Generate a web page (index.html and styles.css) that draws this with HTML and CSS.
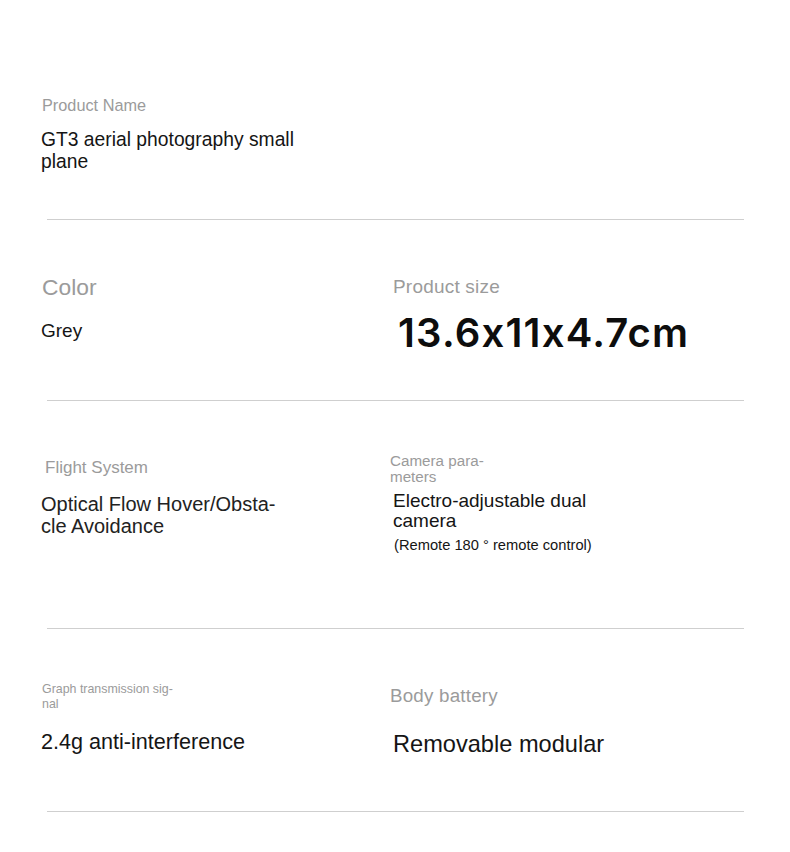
FILE: index.html
```html
<!DOCTYPE html>
<html lang="en">
<head>
<meta charset="utf-8">
<title>GT3 specs</title>
<link rel="stylesheet" href="styles.css">
</head>
<body>
<main class="sheet">
  <section class="spec s1">
    <div class="cell">
      <div class="label l-name">Product Name</div>
      <div class="value v-name">GT3 aerial photography small<br>plane</div>
    </div>
    <div class="cell"></div>
  </section>
  <div class="rule"></div>

  <section class="spec s2">
    <div class="cell">
      <div class="label l-color">Color</div>
      <div class="value v-color">Grey</div>
    </div>
    <div class="cell">
      <div class="label l-size">Product size</div>
      <div class="value v-size">13.6x11x4.7cm</div>
    </div>
  </section>
  <div class="rule"></div>

  <section class="spec s3">
    <div class="cell">
      <div class="label l-flight">Flight System</div>
      <div class="value v-flight">Optical Flow Hover/Obsta-<br>cle Avoidance</div>
    </div>
    <div class="cell">
      <div class="label l-camera">Camera para-<br>meters</div>
      <div class="value v-camera">Electro-adjustable dual<br>camera</div>
      <div class="value v-remote">(Remote 180 ° remote control)</div>
    </div>
  </section>
  <div class="rule"></div>

  <section class="spec s4">
    <div class="cell">
      <div class="label l-graph">Graph transmission sig-<br>nal</div>
      <div class="value v-graph">2.4g anti-interference</div>
    </div>
    <div class="cell">
      <div class="label l-battery">Body battery</div>
      <div class="value v-battery">Removable modular</div>
    </div>
  </section>
  <div class="rule"></div>
</main>
</body>
</html>
```

FILE: styles.css
```css
html, body {
  margin: 0;
  padding: 0;
  background: #ffffff;
}

body {
  font-family: "Liberation Sans", Arial, sans-serif;
  width: 790px;
  height: 852px;
  overflow: hidden;
}

.sheet {
  display: flex;
  flex-direction: column;
}

.spec {
  display: grid;
  grid-template-columns: 349px 1fr;
  padding-left: 41px;
  box-sizing: border-box;
}

.s1 { height: 219px; }
.s2 { height: 180px; }
.s3 { height: 227px; }
.s4 { height: 182px; }

.rule {
  height: 1px;
  margin: 0 46px 0 47px;
  background: #cfcfcf;
}

.cell {
  display: flex;
  flex-direction: column;
  align-items: flex-start;
}

.label {
  color: #9b9b9b;
  white-space: nowrap;
}

.value {
  color: #151515;
  white-space: nowrap;
}

/* section 1 */
.l-name {
  font-size: 16.3px;
  line-height: 20px;
  margin: 95px 0 0 1px;
}
.v-name {
  font-size: 19.3px;
  line-height: 22px;
  margin-top: 14px;
}

/* section 2 */
.l-color {
  font-size: 22.8px;
  line-height: 26px;
  margin: 54px 0 0 1px;
}
.v-color {
  font-size: 19px;
  line-height: 22px;
  margin-top: 20px;
}
.l-size {
  font-size: 19px;
  line-height: 22px;
  letter-spacing: 0.2px;
  margin: 56px 0 0 3px;
}
.v-size {
  font-family: Inter, "Liberation Sans", sans-serif;
  font-weight: 600;
  font-size: 40px;
  line-height: 48px;
  letter-spacing: 1.2px;
  font-feature-settings: "calt" 0;
  margin: 11px 0 0 8px;
  color: #0d0d0d;
}

/* section 3 */
.l-flight {
  font-size: 17px;
  line-height: 20px;
  margin: 57px 0 0 4px;
}
.v-flight {
  font-size: 20px;
  line-height: 22px;
  margin-top: 15px;
  color: #222222;
}
.l-camera {
  font-size: 15.2px;
  line-height: 15.5px;
  margin-top: 52px;
}
.v-camera {
  font-size: 19px;
  line-height: 20px;
  margin: 7px 0 0 3px;
}
.v-remote {
  font-size: 14.7px;
  line-height: 18px;
  margin: 5px 0 0 4px;
}

/* section 4 */
.l-graph {
  font-size: 12.4px;
  line-height: 14.5px;
  margin: 53px 0 0 1px;
}
.v-graph {
  font-size: 21.6px;
  line-height: 24px;
  margin-top: 19px;
}
.l-battery {
  font-size: 18.8px;
  line-height: 22px;
  letter-spacing: 0.2px;
  margin-top: 56px;
}
.v-battery {
  font-size: 23.6px;
  line-height: 26px;
  margin: 24px 0 0 3px;
}
```
